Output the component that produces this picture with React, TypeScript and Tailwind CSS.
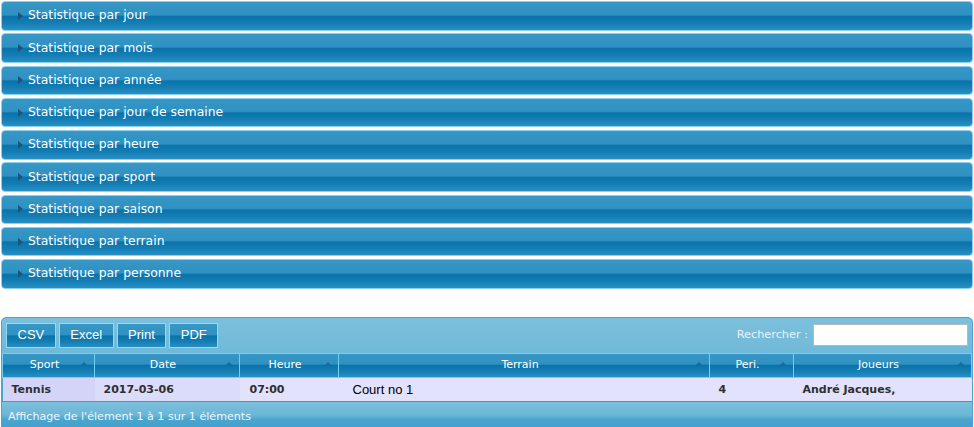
import { useState } from 'react'

const sections = [
  'Statistique par jour',
  'Statistique par mois',
  'Statistique par année',
  'Statistique par jour de semaine',
  'Statistique par heure',
  'Statistique par sport',
  'Statistique par saison',
  'Statistique par terrain',
  'Statistique par personne',
]

const columns = [
  { label: 'Sport', width: 'w-[92px]' },
  { label: 'Date', width: 'w-[145px]' },
  { label: 'Heure', width: 'w-[99px]' },
  { label: 'Terrain', width: 'w-[371px]' },
  { label: 'Peri.', width: 'w-[84px]' },
  { label: 'Joueurs', width: '' },
]

const exportButtons = ['CSV', 'Excel', 'Print', 'PDF']

const gloss =
  'bg-[linear-gradient(to_bottom,#3797c6_0%,#2f91c2_46%,#0b73aa_52%,#137db4_75%,#2990c3_100%)]'

const wave =
  'bg-[linear-gradient(to_bottom,#7cc0dc_0%,#6cb6d7_45%,#4aa5ce_60%,#42a0cb_100%)]'

function SortArrow() {
  return (
    <svg width="8" height="5" viewBox="0 0 8 5" className="shrink-0">
      <path d="M0 5 L4 1 L8 5 Z" fill="#1a6a99" />
    </svg>
  )
}

function AccordionHeader({ title }: { title: string }) {
  return (
    <div
      className={`flex h-[29.5px] items-center rounded-[4px] border border-[#8ccfee] ${gloss} pl-[16px] text-[12.4px] text-white`}
    >
      <svg width="5" height="8" viewBox="0 0 5 8" className="mr-[5px]">
        <path d="M0 0 L5 4 L0 8 Z" fill="#17577d" />
      </svg>
      <span>{title}</span>
    </div>
  )
}

export default function App() {
  const [query, setQuery] = useState('')

  return (
    <div className="bg-white px-[1px] pt-[1px] [font-family:'DejaVu_Sans',sans-serif]">
      <div className="flex flex-col gap-[2.75px]">
        {sections.map((s) => (
          <AccordionHeader key={s} title={s} />
        ))}
      </div>

      <div className={`mt-[28px] overflow-hidden rounded-t-[5px] border border-[#4ba3d6] ${wave}`}>
        <div className="flex h-[35px] items-center justify-between px-[4px]">
          <div className="flex gap-[3px]">
            {exportButtons.map((b) => (
              <button
                key={b}
                className={`h-[25px] border border-[#8fdaf7] ${gloss} px-[10.5px] text-[13px] text-white [font-family:'Liberation_Sans',Arial,sans-serif]`}
              >
                {b}
              </button>
            ))}
          </div>
          <label className="flex items-center gap-[5px] text-[11.3px] text-[#e6f3fa]">
            Rechercher :
            <input
              value={query}
              onChange={(e) => setQuery(e.target.value)}
              className="h-[22px] w-[155px] border border-[#b8b8b8] bg-white px-1 text-[12px] text-black outline-none"
            />
          </label>
        </div>

        <table className="w-full border-collapse text-[11px]">
          <thead>
            <tr className={`h-[24px] ${gloss}`}>
              {columns.map((c) => (
                <th
                  key={c.label}
                  className={`${c.width} border border-[#6fd0f5] p-0 pt-[1px] font-normal text-white`}
                >
                  <div className="relative flex items-center justify-center pr-[8px]">
                    <span>{c.label}</span>
                    <span className="absolute right-[6px] top-[4px]">
                      <SortArrow />
                    </span>
                  </div>
                </th>
              ))}
            </tr>
          </thead>
          <tbody>
            <tr className="h-[24px] bg-[#e2e2fd] font-bold text-[#2f2f2f]">
              <td className="bg-[#d4d4f8] pl-[9px] pt-[1px]">Tennis</td>
              <td className="bg-[#dbdbfb] pl-[9px] pt-[1px]">2017-03-06</td>
              <td className="pl-[10px] pt-[1px]">07:00</td>
              <td className="pl-[14px] pt-[1px] text-[13px] font-normal text-black [font-family:'Liberation_Sans',Arial,sans-serif]">
                Court no 1
              </td>
              <td className="pl-[9px] pt-[1px]">4</td>
              <td className="pl-[9px] pt-[1px]">André Jacques,</td>
            </tr>
          </tbody>
        </table>

        <div className={`h-[30px] border-t border-[#3d9ad2] ${wave} pl-[6px] pt-[7px] text-[11.1px] text-[#eef7fb]`}>
          Affichage de l'élement 1 à 1 sur 1 éléments
        </div>
      </div>
    </div>
  )
}
